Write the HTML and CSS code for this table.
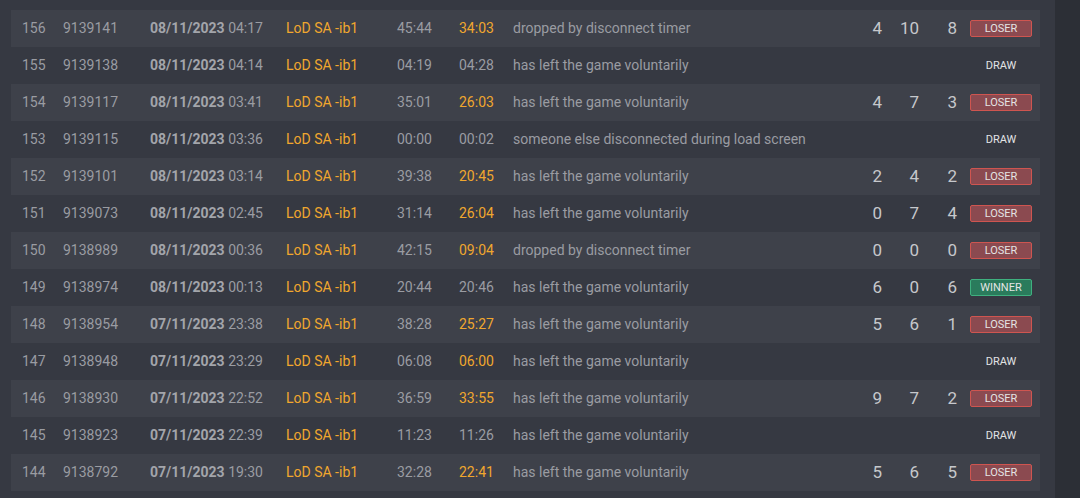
FILE: index.html
```html
<!DOCTYPE html>
<html>
<head>
<meta charset="utf-8">
<link rel="stylesheet" href="styles.css">
</head>
<body>
<div class="page">
  <main class="main">
    <div class="table">
      <div class="row odd"><span class="c-num">156</span><span class="c-id">9139141</span><span class="c-date"><b>08/11/2023</b> 04:17</span><span class="c-name">LoD SA -ib1</span><span class="c-t1">45:44</span><span class="c-t2 hi">34:03</span><span class="c-reason">dropped by disconnect timer</span><span class="c-s">4</span><span class="c-s s2">10</span><span class="c-s s3">8</span><span class="c-res"><span class="badge loser">LOSER</span></span></div>
      <div class="row"><span class="c-num">155</span><span class="c-id">9139138</span><span class="c-date"><b>08/11/2023</b> 04:14</span><span class="c-name">LoD SA -ib1</span><span class="c-t1">04:19</span><span class="c-t2">04:28</span><span class="c-reason">has left the game voluntarily</span><span class="c-s"></span><span class="c-s s2"></span><span class="c-s s3"></span><span class="c-res"><span class="badge draw">DRAW</span></span></div>
      <div class="row odd"><span class="c-num">154</span><span class="c-id">9139117</span><span class="c-date"><b>08/11/2023</b> 03:41</span><span class="c-name">LoD SA -ib1</span><span class="c-t1">35:01</span><span class="c-t2 hi">26:03</span><span class="c-reason">has left the game voluntarily</span><span class="c-s">4</span><span class="c-s s2">7</span><span class="c-s s3">3</span><span class="c-res"><span class="badge loser">LOSER</span></span></div>
      <div class="row"><span class="c-num">153</span><span class="c-id">9139115</span><span class="c-date"><b>08/11/2023</b> 03:36</span><span class="c-name">LoD SA -ib1</span><span class="c-t1">00:00</span><span class="c-t2">00:02</span><span class="c-reason">someone else disconnected during load screen</span><span class="c-s"></span><span class="c-s s2"></span><span class="c-s s3"></span><span class="c-res"><span class="badge draw">DRAW</span></span></div>
      <div class="row odd"><span class="c-num">152</span><span class="c-id">9139101</span><span class="c-date"><b>08/11/2023</b> 03:14</span><span class="c-name">LoD SA -ib1</span><span class="c-t1">39:38</span><span class="c-t2 hi">20:45</span><span class="c-reason">has left the game voluntarily</span><span class="c-s">2</span><span class="c-s s2">4</span><span class="c-s s3">2</span><span class="c-res"><span class="badge loser">LOSER</span></span></div>
      <div class="row"><span class="c-num">151</span><span class="c-id">9139073</span><span class="c-date"><b>08/11/2023</b> 02:45</span><span class="c-name">LoD SA -ib1</span><span class="c-t1">31:14</span><span class="c-t2 hi">26:04</span><span class="c-reason">has left the game voluntarily</span><span class="c-s">0</span><span class="c-s s2">7</span><span class="c-s s3">4</span><span class="c-res"><span class="badge loser">LOSER</span></span></div>
      <div class="row odd"><span class="c-num">150</span><span class="c-id">9138989</span><span class="c-date"><b>08/11/2023</b> 00:36</span><span class="c-name">LoD SA -ib1</span><span class="c-t1">42:15</span><span class="c-t2 hi">09:04</span><span class="c-reason">dropped by disconnect timer</span><span class="c-s">0</span><span class="c-s s2">0</span><span class="c-s s3">0</span><span class="c-res"><span class="badge loser">LOSER</span></span></div>
      <div class="row"><span class="c-num">149</span><span class="c-id">9138974</span><span class="c-date"><b>08/11/2023</b> 00:13</span><span class="c-name">LoD SA -ib1</span><span class="c-t1">20:44</span><span class="c-t2">20:46</span><span class="c-reason">has left the game voluntarily</span><span class="c-s">6</span><span class="c-s s2">0</span><span class="c-s s3">6</span><span class="c-res"><span class="badge winner">WINNER</span></span></div>
      <div class="row odd"><span class="c-num">148</span><span class="c-id">9138954</span><span class="c-date"><b>07/11/2023</b> 23:38</span><span class="c-name">LoD SA -ib1</span><span class="c-t1">38:28</span><span class="c-t2 hi">25:27</span><span class="c-reason">has left the game voluntarily</span><span class="c-s">5</span><span class="c-s s2">6</span><span class="c-s s3">1</span><span class="c-res"><span class="badge loser">LOSER</span></span></div>
      <div class="row"><span class="c-num">147</span><span class="c-id">9138948</span><span class="c-date"><b>07/11/2023</b> 23:29</span><span class="c-name">LoD SA -ib1</span><span class="c-t1">06:08</span><span class="c-t2 hi">06:00</span><span class="c-reason">has left the game voluntarily</span><span class="c-s"></span><span class="c-s s2"></span><span class="c-s s3"></span><span class="c-res"><span class="badge draw">DRAW</span></span></div>
      <div class="row odd"><span class="c-num">146</span><span class="c-id">9138930</span><span class="c-date"><b>07/11/2023</b> 22:52</span><span class="c-name">LoD SA -ib1</span><span class="c-t1">36:59</span><span class="c-t2 hi">33:55</span><span class="c-reason">has left the game voluntarily</span><span class="c-s">9</span><span class="c-s s2">7</span><span class="c-s s3">2</span><span class="c-res"><span class="badge loser">LOSER</span></span></div>
      <div class="row"><span class="c-num">145</span><span class="c-id">9138923</span><span class="c-date"><b>07/11/2023</b> 22:39</span><span class="c-name">LoD SA -ib1</span><span class="c-t1">11:23</span><span class="c-t2">11:26</span><span class="c-reason">has left the game voluntarily</span><span class="c-s"></span><span class="c-s s2"></span><span class="c-s s3"></span><span class="c-res"><span class="badge draw">DRAW</span></span></div>
      <div class="row odd"><span class="c-num">144</span><span class="c-id">9138792</span><span class="c-date"><b>07/11/2023</b> 19:30</span><span class="c-name">LoD SA -ib1</span><span class="c-t1">32:28</span><span class="c-t2 hi">22:41</span><span class="c-reason">has left the game voluntarily</span><span class="c-s">5</span><span class="c-s s2">6</span><span class="c-s s3">5</span><span class="c-res"><span class="badge loser">LOSER</span></span></div>
    </div>
  </main>
  <aside class="strip"></aside>
</div>
</body>
</html>
```

FILE: styles.css
```css
* { box-sizing: border-box; }
html, body { margin: 0; padding: 0; }
body {
  width: 1080px;
  height: 498px;
  overflow: hidden;
  background: #363942;
  font-family: Roboto, "Liberation Sans", sans-serif;
  font-size: 14px;
  color: #9a9ca2;
}
.page { display: flex; height: 498px; }
.main {
  width: 1055px;
  padding: 10px 15px 0 11px;
  background: #363942;
}
.strip { width: 25px; background: #2c2f36; }
.table { display: flex; flex-direction: column; }
.row {
  display: flex;
  align-items: center;
  height: 37px;
  padding-left: 11px;
  padding-bottom: 2px;
  white-space: nowrap;
}
.row.odd { background: #3e414a; }
.c-num { width: 41px; }
.c-id { width: 87px; }
.c-date { width: 136px; }
.c-date b { font-weight: 700; color: #a3a5ab; }
.c-name { width: 111px; color: #f0a72e; }
.c-t1 { width: 62px; }
.c-t2 { width: 54px; }
.hi { color: #f0a72e; }
.c-reason { width: 347px; }
.c-s {
  width: 22px;
  text-align: right;
  font-size: 17px;
  color: #c6c8cc;
}
.c-s.s2 { width: 37px; }
.c-s.s3 { width: 51px; padding-right: 13px; }
.c-res { width: 62px; display: flex; justify-content: center; margin-top: 2px; }
.badge {
  display: block;
  width: 62px;
  height: 17px;
  line-height: 15px;
  font-size: 11px;
  text-align: center;
  color: #e4e4e4;
  border: 1px solid transparent;
  border-radius: 2px;
}
.badge.loser { background: #8b4a50; border-color: #cf5550; }
.badge.winner { background: #2a7b5c; border-color: #3fb07f; }
.badge.draw { color: #e2e3e5; font-weight: 400; }
```
